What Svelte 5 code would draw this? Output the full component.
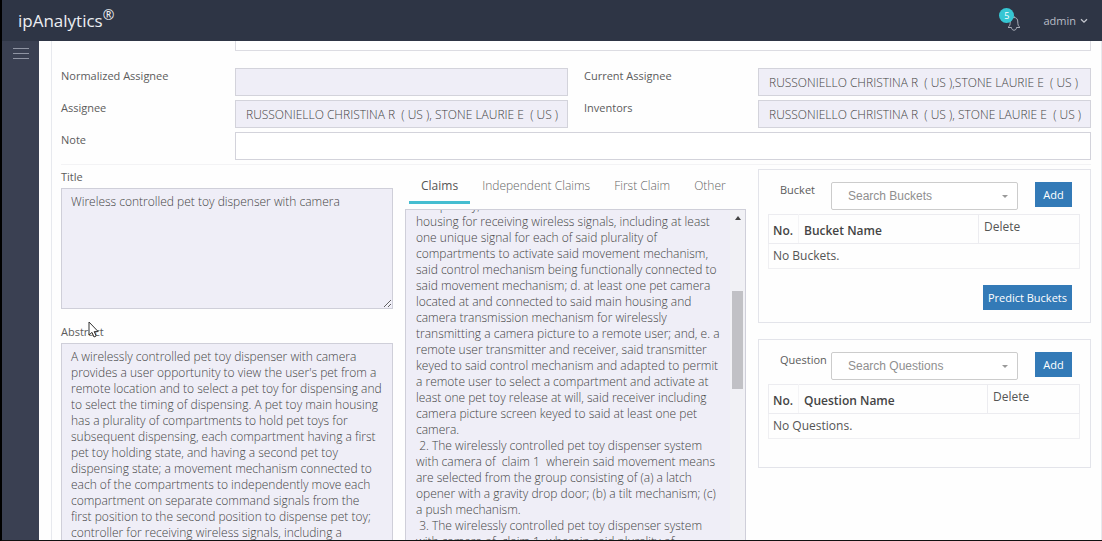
<script>
  const abstractText =
    "A wirelessly controlled pet toy dispenser with camera\nprovides a user opportunity to view the user's pet from a\nremote location and to select a pet toy for dispensing and\nto select the timing of dispensing. A pet toy main housing\nhas a plurality of compartments to hold pet toys for\nsubsequent dispensing, each compartment having a first\npet toy holding state, and having a second pet toy\ndispensing state; a movement mechanism connected to\neach of the compartments to independently move each\ncompartment on separate command signals from the\nfirst position to the second position to dispense pet toy;\ncontroller for receiving wireless signals, including a\nunique signal for each of the plurality of compartments.";

  const claimsText =
    'one pet toy; & a control mechanism located at said main\nhousing for receiving wireless signals, including at least\none unique signal for each of said plurality of\ncompartments to activate said movement mechanism,\nsaid control mechanism being functionally connected to\nsaid movement mechanism; d. at least one pet camera\nlocated at and connected to said main housing and\ncamera transmission mechanism for wirelessly\ntransmitting a camera picture to a remote user; and, e. a\nremote user transmitter and receiver, said transmitter\nkeyed to said control mechanism and adapted to permit\na remote user to select a compartment and activate at\nleast one pet toy release at will, said receiver including\ncamera picture screen keyed to said at least one pet\ncamera.\n' +
    ' 2. The wirelessly controlled pet toy dispenser system\nwith camera of  claim 1  wherein said movement means\nare selected from the group consisting of (a) a latch\nopener with a gravity drop door; (b) a tilt mechanism; (c)\na push mechanism.\n' +
    ' 3. The wirelessly controlled pet toy dispenser system\nwith camera of  claim 1  wherein said plurality of\ncompartments is at least three compartments.\n' +
    ' 4. The wirelessly controlled pet toy dispenser system\nwith camera of  claim 1  wherein said main housing is\nadapted to rest on a floor.';

  const fields = [
    { id: 'normalized', label: 'Normalized Assignee', value: '' },
    { id: 'current', label: 'Current Assignee', value: 'RUSSONIELLO CHRISTINA R  ( US ),STONE LAURIE E  ( US )' },
    { id: 'assignee', label: 'Assignee', value: 'RUSSONIELLO CHRISTINA R  ( US ), STONE LAURIE E  ( US )' },
    { id: 'inventors', label: 'Inventors', value: 'RUSSONIELLO CHRISTINA R  ( US ), STONE LAURIE E  ( US )' }
  ];

  const tabs = ['Claims', 'Independent Claims', 'First Claim', 'Other'];
  let active = $state('Claims');

  const panels = [
    { name: 'Bucket', plural: 'Buckets', predict: true },
    { name: 'Question', plural: 'Questions', predict: false }
  ];

  let claimsBox;
  $effect(() => {
    claimsBox.scrollTop = 17;
  });
</script>

<div class="app">
  <header class="topbar">
    <a class="brand" href="#home">ipAnalytics<sup>®</sup></a>
    <div class="user">
      <button class="bell" aria-label="Notifications">
        <svg width="16" height="18" viewBox="0 0 16 18" fill="none" stroke="#a9adb8" stroke-width="1">
          <path d="M2 13.500h3.500M10.500 13.500H14c-1.800-1.400-2.200-2.800-2.200-5.500 0-3-1.300-4.500-3.800-4.500s-3.800 1.500-3.800 4.500c0 2.700-.4 4.100-2.200 5.500" />
          <path d="M5.500 13.500c0 3.600 5 3.600 5 0M8 3.500v-1.500" />
        </svg>
        <span class="count">5</span>
      </button>
      <button class="account">
        admin
        <svg width="8" height="6" viewBox="0 0 8 6" fill="none" stroke="#c3c6ce" stroke-width="1.300"><path d="M1 1.200l3 3 3-3" /></svg>
      </button>
    </div>
  </header>

  <div class="body">
    <nav class="side">
      <button class="menu" aria-label="Menu">
        <svg width="16" height="12" viewBox="0 0 16 12" stroke="#8f94a3" stroke-width="1"><path d="M0 .5h16M0 5.500h16M0 10.500h16" /></svg>
      </button>
    </nav>

    <main>
      <div class="sheet">
        <div class="clipped"></div>

        <div class="fields">
          {#each fields as f}
            <div class="field">
              <label for={f.id}>{f.label}</label>
              <input id={f.id} type="text" value={f.value} readonly />
            </div>
          {/each}
          <div class="field wide">
            <label for="note">Note</label>
            <input id="note" type="text" />
          </div>
        </div>

        <div class="columns">
          <section class="texts">
            <label for="title">Title</label>
            <textarea id="title" readonly value="Wireless controlled pet toy dispenser with camera"></textarea>
            <div class="abstract-label">
              <label for="abstract">Abstract</label>
              <svg class="pointer" width="12" height="18" viewBox="0 0 12 18" fill="#fff" stroke="#333" stroke-width="1">
                <path d="M1 1v13l3-2.600 2 4.600 2.200-1-2-4.400h4z" />
              </svg>
            </div>
            <textarea id="abstract" class="tall" readonly value={abstractText}></textarea>
          </section>

          <section class="claims">
            <div class="tabs" role="tablist">
              {#each tabs as t}
                <button role="tab" aria-selected={active === t} class:active={active === t} onclick={() => (active = t)}>{t}</button>
              {/each}
            </div>
            <div class="claims-box">
              <textarea aria-label="Claims" readonly bind:this={claimsBox} value={claimsText}></textarea>
              <div class="scroll">
                <svg width="6" height="4" viewBox="0 0 6 4"><path d="M0 4l3-4 3 4z" fill="#444" /></svg>
                <div class="thumb"></div>
              </div>
            </div>
          </section>

          <aside>
            {#each panels as p}
              <section class="panel">
                <div class="pick">
                  <label for={p.name}>{p.name}</label>
                  <div class="select">
                    <select id={p.name}><option>Search {p.plural}</option></select>
                    <span class="caret"></span>
                  </div>
                  <button class="primary">Add</button>
                </div>
                <table>
                  <thead>
                    <tr>
                      <th class="no">No.</th>
                      <th>{p.name} Name</th>
                      <th class="delete" class:slim={!p.predict}>Delete</th>
                    </tr>
                  </thead>
                  <tbody>
                    <tr><td colspan="3">No {p.plural}.</td></tr>
                  </tbody>
                </table>
                <div class="foot">
                  {#if p.predict}<button class="primary">Predict Buckets</button>{/if}
                </div>
              </section>
            {/each}
          </aside>
        </div>
      </div>
    </main>
  </div>
</div>

<style>
  :global(body) {
    margin: 0;
  }
  .app,
  .app * {
    box-sizing: border-box;
  }
  .app {
    display: flex;
    flex-direction: column;
    height: 100vh;
    overflow: hidden;
    border-left: 2px solid #000;
    border-bottom: 1px solid #111;
    background: #fefefe;
    color: #444;
    font: 12px/16px 'Open Sans', sans-serif;
  }
  button,
  input,
  textarea {
    font: inherit;
    color: inherit;
    margin: 0;
  }
  input,
  textarea {
    font-weight: 300;
  }
  button {
    border: 0;
    background: none;
    padding: 0;
    cursor: pointer;
    white-space: nowrap;
  }
  .topbar {
    flex: none;
    display: flex;
    align-items: center;
    justify-content: space-between;
    height: 41px;
    padding: 0 14px 0 16px;
    background: #2e3545;
  }
  .brand {
    color: #eceef2;
    font-size: 17px;
    line-height: 24px;
    text-decoration: none;
  }
  sup {
    font-size: 14px;
    line-height: 0;
  }
  .user {
    display: flex;
    align-items: center;
    gap: 21px;
  }
  .bell {
    position: relative;
    display: flex;
    padding-top: 4px;
  }
  .count {
    position: absolute;
    left: -7px;
    top: -2px;
    width: 15px;
    height: 15px;
    border-radius: 50%;
    background: #36c6d3;
    color: #fff;
    font-size: 9px;
    line-height: 15px;
    text-align: center;
  }
  .account {
    display: flex;
    align-items: center;
    gap: 4px;
    color: #b9bdc7;
    font-size: 11px;
  }
  .body {
    flex: 1;
    display: flex;
    min-height: 0;
  }
  .side {
    flex: none;
    width: 37px;
    padding: 7px 11px;
    background: #3a4052;
  }
  .menu {
    display: flex;
  }
  main {
    flex: 1;
    min-width: 0;
    padding-left: 12px;
    overflow: hidden;
  }
  .sheet {
    min-height: 100%;
    padding: 0 10px 0 9px;
    border: 1px solid #e7e9ee;
    border-width: 0 1px;
  }
  .clipped {
    height: 10px;
    margin: 0 0 17px 174px;
    border: 1px solid #dcdce2;
    border-top: 0;
    background: #fff;
  }
  .fields {
    display: grid;
    grid-template-columns: 1fr 1fr;
    gap: 4px 16px;
    padding-bottom: 4px;
    border-bottom: 1px solid #f3f3f5;
  }
  .field {
    display: grid;
    grid-template-columns: 174px 1fr;
  }
  .wide {
    grid-column: 1 / -1;
  }
  label {
    font-size: 11px;
    color: #5c5c5c;
  }
  input {
    width: 100%;
    height: 28px;
    padding: 0 4px 0 10px;
    border: 1px solid #d3d3db;
    border-radius: 0;
    background: #fff;
    white-space: pre;
  }
  input:read-only,
  textarea {
    background: #efeef7;
  }
  .columns {
    display: grid;
    grid-template-columns: minmax(0, 332fr) minmax(0, 341fr) minmax(0, 333fr);
    gap: 12px;
    padding-top: 4px;
  }
  .texts {
    display: flex;
    flex-direction: column;
  }
  textarea {
    display: block;
    width: 100%;
    height: 121px;
    padding: 5px 0 5px 9px;
    border: 1px solid #cfcfd9;
    border-radius: 0;
    overflow: hidden;
    resize: vertical;
  }
  .texts label {
    display: block;
    height: 19px;
    line-height: 16px;
  }
  .texts .tall {
    height: 240px;
  }
  .abstract-label {
    position: relative;
    padding-top: 15px;
    height: 34px;
  }
  .pointer {
    position: absolute;
    left: 27px;
    top: 12px;
  }
  .tabs {
    display: flex;
    padding: 0 4px;
    height: 40px;
  }
  .tabs button {
    height: 35px;
    padding: 1px 12px 0;
    border-bottom: 3px solid transparent;
    color: #666;
    font-weight: 300;
  }
  .tabs .active {
    border-color: #45bdd0;
    color: #555;
    font-weight: 400;
  }
  .claims-box {
    display: flex;
    height: 360px;
    border: 1px solid #cfcfd9;
    background: #efeef7;
  }
  .claims-box textarea {
    flex: 1;
    min-width: 0;
    height: 100%;
    border: 0;
    padding-left: 10px;
    resize: none;
  }
  .scroll {
    flex: none;
    display: flex;
    flex-direction: column;
    align-items: center;
    width: 15px;
    padding: 6px 2px 0;
    background: #f1f1f5;
  }
  .thumb {
    width: 11px;
    height: 98px;
    margin-top: 71px;
    background: #c1c1c5;
  }
  aside {
    display: flex;
    flex-direction: column;
    gap: 16px;
  }
  .panel {
    padding: 12px 10px 0 9px;
    border: 1px solid #e3e4ea;
  }
  .pick {
    display: grid;
    grid-template-columns: 51px 1fr 37px;
    align-items: start;
    padding: 0 8px 0 12px;
    margin-bottom: 4px;
  }
  .select {
    position: relative;
    margin-right: 17px;
  }
  select {
    display: block;
    width: 100%;
    height: 28px;
    padding: 0 16px;
    appearance: none;
    border: 1px solid #ccc;
    border-radius: 2px;
    background: #fff;
    color: #8f8f8f;
    font: 12px/16px 'Liberation Sans', sans-serif;
  }
  .caret {
    position: absolute;
    right: 10px;
    top: 13px;
    border: 3px solid transparent;
    border-top-color: #999;
    border-bottom: 0;
    pointer-events: none;
  }
  .primary {
    height: 25px;
    padding: 0 5px;
    background: #337ab7;
    color: #fff;
    font-size: 11px;
  }
  table {
    width: 100%;
    border-collapse: collapse;
    border: 1px solid #efeff2;
  }
  th,
  td {
    padding: 4px;
    text-align: left;
    color: #555;
  }
  th {
    height: 29px;
    padding: 4px 5px 0;
    border: 1px solid #ececf0;
    font-weight: 600;
    color: #444;
  }
  .no {
    width: 30px;
    padding: 4px 4px 0;
    border-right-color: #f4f4f6;
  }
  .delete {
    width: 101px;
    vertical-align: top;
    font-weight: 400;
    color: #555;
  }
  .slim {
    width: 92px;
  }
  .foot {
    display: flex;
    justify-content: flex-end;
    min-height: 28px;
    padding-right: 8px;
  }
  .foot .primary {
    margin: 16px 0 12px;
  }
</style>
